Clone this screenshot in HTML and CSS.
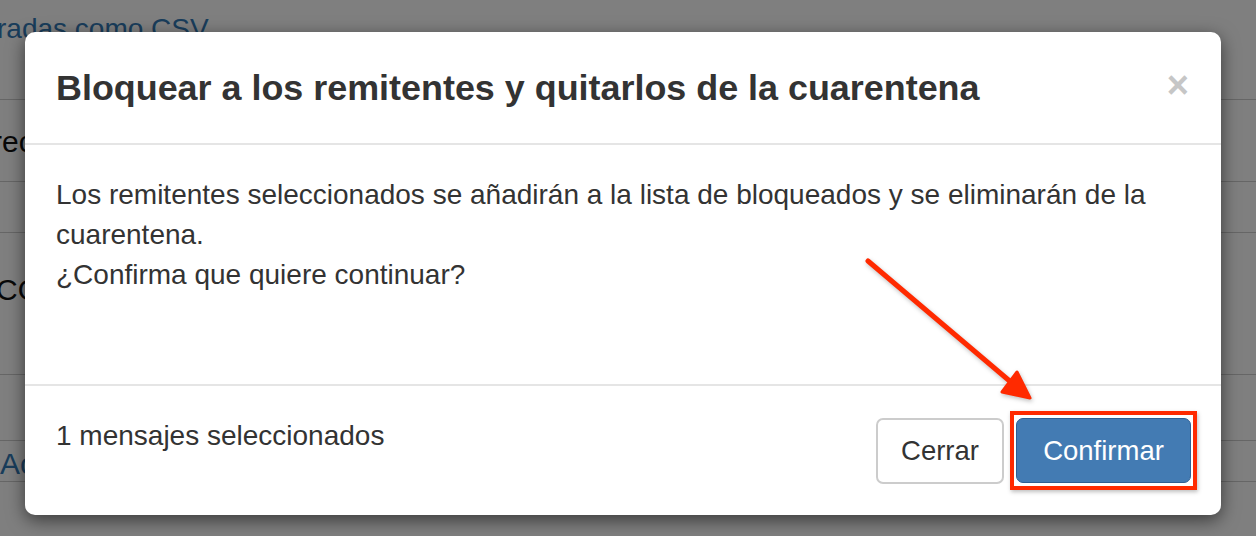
FILE: index.html
```html
<!DOCTYPE html>
<html lang="es">
<head>
  <meta charset="UTF-8" />
  <title>Bloquear remitentes</title>
  <link rel="stylesheet" href="styles.css">
</head>
<body>
  <div class="page">
    <div class="row row-top"><a href="#">radas como CSV</a></div>
    <div class="row row-a">rec</div>
    <div class="row row-b"></div>
    <div class="row row-c">CO</div>
    <div class="row row-d"></div>
    <div class="row row-e"><a href="#">Ac</a></div>
  </div>

  <div class="backdrop"></div>

  <!-- Modal -->
  <div class="modal">
    <div class="modal-header">
      <h4 class="modal-title">Bloquear a los remitentes y quitarlos de la cuarentena</h4>
      <span class="close">&times;</span>
    </div>
    <div class="modal-body">
      <p>Los remitentes seleccionados se añadirán a la lista de bloqueados y se eliminarán de la cuarentena.<br>¿Confirma que quiere continuar?</p>
    </div>
    <div class="modal-footer">
      <span class="selected-count">1 mensajes seleccionados</span>
      <div class="buttons">
        <button class="btn btn-default">Cerrar</button>
        <span class="highlight"><button class="btn btn-primary">Confirmar</button></span>
      </div>
    </div>
  </div>

  <svg class="arrow" width="1256" height="536" viewBox="0 0 1256 536">
    <line x1="868" y1="261" x2="1012" y2="383" stroke="#ff2a00" stroke-width="5" stroke-linecap="round" />
    <polygon points="1030,398 1002,392 1017,372" fill="#ff2a00" stroke="#ff2a00" stroke-width="3" stroke-linejoin="round" />
  </svg>
</body>
</html>
```

FILE: styles.css
```css
body {
  margin: 0;
  font-family: "Liberation Sans", Arial, sans-serif;
  color: #333;
  background: #fff;
  width: 1256px;
  height: 536px;
  overflow: hidden;
  position: relative;
}
.page {
  font-size: 30px;
  color: #111;
}
.page a {
  color: #337ab7;
  text-decoration: none;
}
.row {
  border-bottom: 1px solid #ccc;
  box-sizing: border-box;
}
.row-top {
  height: 100px;
  margin-left: -3px;
  padding-top: 13px;
  font-size: 28px;
}
.row-a {
  height: 82px;
  padding-top: 25px;
  margin-left: -8px;
}
.row-b {
  height: 51px;
}
.row-c {
  height: 142px;
  padding-top: 40px;
  margin-left: -4px;
}
.row-d {
  height: 66px;
}
.row-e {
  padding-top: 6px;
}
.backdrop {
  position: absolute;
  top: 0; left: 0;
  width: 100%; height: 100%;
  background-color: rgba(0,0,0,0.5);
}
.modal {
  position: absolute;
  top: 32px;
  left: 25px;
  width: 1196px;
  height: 483px;
  background: #fff;
  border-radius: 10px;
  box-shadow: 0 5px 18px rgba(0,0,0,0.55);
  display: flex;
  flex-direction: column;
}
.modal-header {
  height: 111px;
  border-bottom: 2px solid #e5e5e5;
  display: flex;
  align-items: center;
  justify-content: space-between;
  padding: 0 32px 0 31px;
}
.modal-title {
  margin: 2px 0 0 0;
  font-size: 35.9px;
  font-weight: bold;
  color: #333;
}
.close {
  font-size: 38px;
  font-weight: bold;
  color: #c6c6c6;
  line-height: 1;
  margin-bottom: 6px;
}
.modal-body {
  height: 241px;
  border-bottom: 2px solid #e5e5e5;
  padding: 0 31px;
  box-sizing: border-box;
}
.modal-body p {
  margin: 0;
  padding-top: 30px;
  font-size: 28px;
  line-height: 40px;
  color: #333;
}
.modal-footer {
  flex: 1;
  display: flex;
  justify-content: space-between;
  align-items: flex-start;
  padding: 25px 24px 0 31px;
}
.selected-count {
  font-size: 28px;
  margin-top: 9px;
}
.buttons {
  display: flex;
  align-items: center;
  gap: 6px;
}
.btn {
  font-family: "Liberation Sans", Arial, sans-serif;
  font-size: 27.5px;
  height: 66px;
  border-radius: 7px;
  padding: 0;
  cursor: pointer;
}
.btn-default {
  background: #fff;
  color: #333;
  border: 2px solid #ccc;
  width: 128px;
}
.btn-primary {
  background: #437bb3;
  color: #fff;
  border: 1px solid #2e5f93;
  width: 175px;
  height: 65px;
  display: block;
}
.highlight {
  border: 4px solid #ff2a00;
  padding: 3px 2px;
  box-shadow: 1px 2px 4px rgba(0,0,0,0.25);
}
.arrow {
  position: absolute;
  top: 0; left: 0;
  filter: drop-shadow(1px 2px 2px rgba(0,0,0,0.25));
}
```
